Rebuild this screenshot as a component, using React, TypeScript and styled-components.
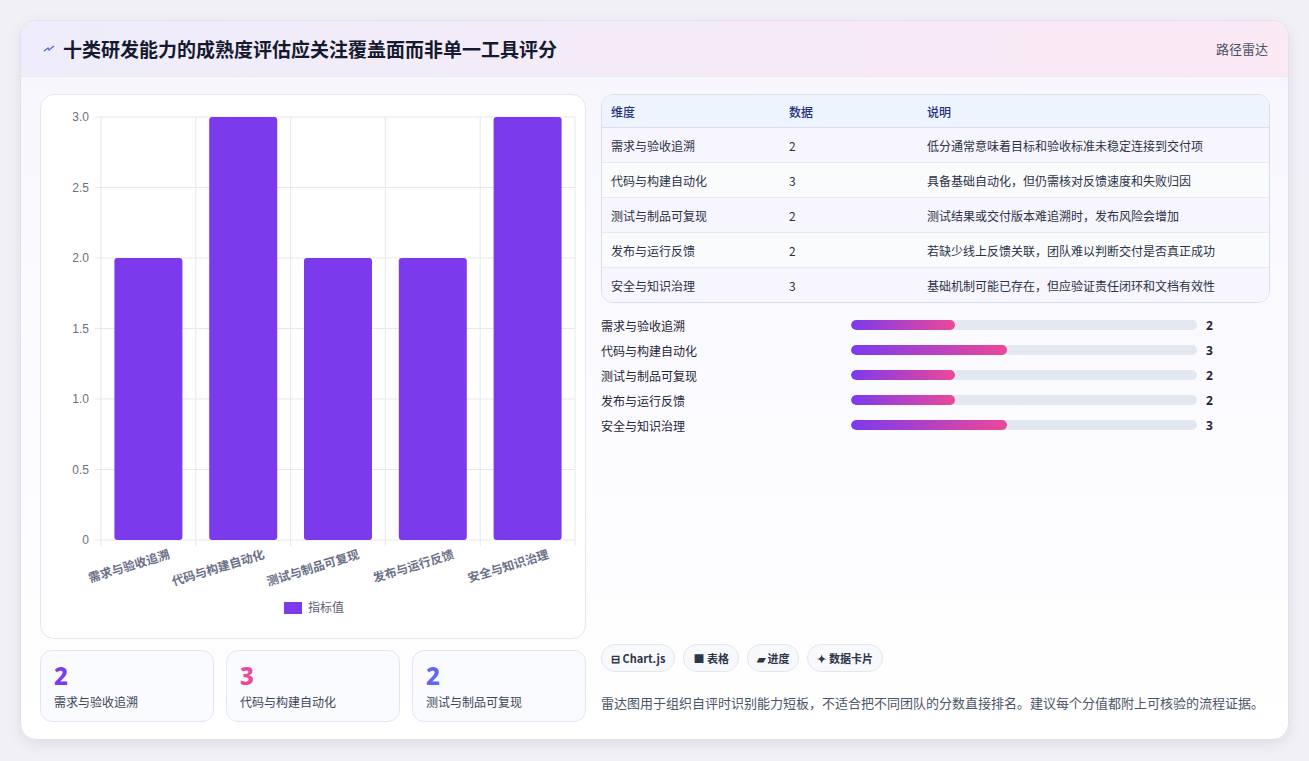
import React from 'react';
import styled, { createGlobalStyle } from 'styled-components';

const GlobalStyle = createGlobalStyle`
  body { margin: 0; background: #f1f1f5; font-family: "Noto Sans CJK SC", "Noto Sans", sans-serif; }
`;

const rows = [
  { name: '需求与验收追溯', value: 2, note: '低分通常意味着目标和验收标准未稳定连接到交付项' },
  { name: '代码与构建自动化', value: 3, note: '具备基础自动化，但仍需核对反馈速度和失败归因' },
  { name: '测试与制品可复现', value: 2, note: '测试结果或交付版本难追溯时，发布风险会增加' },
  { name: '发布与运行反馈', value: 2, note: '若缺少线上反馈关联，团队难以判断交付是否真正成功' },
  { name: '安全与知识治理', value: 3, note: '基础机制可能已存在，但应验证责任闭环和文档有效性' },
];

const Page = styled.div`
  padding: 20px 20px 21px 20px;
`;

const Card = styled.div`
  height: 718px;
  border: 1px solid #e2e0f0;
  border-radius: 16px;
  background: linear-gradient(180deg, #f7f6fe 0%, #ffffff 100%);
  box-shadow: 0 4px 14px rgba(60, 50, 120, 0.1);
  overflow: hidden;
  display: flex;
  flex-direction: column;
`;

const Header = styled.div`
  height: 55px;
  flex-shrink: 0;
  display: flex;
  align-items: center;
  justify-content: space-between;
  padding: 0 20px 0 22px;
  background: linear-gradient(90deg, #efedfb 0%, #fbe9f4 100%);
  border-bottom: 1px solid #ebe6f3;
`;

const Title = styled.h1`
  margin: 0;
  font-size: 19px;
  font-weight: 700;
  color: #161a2e;
  display: flex;
  align-items: center;
  gap: 8px;
`;

const Tag = styled.span`
  font-size: 13px;
  color: #4b5268;
`;

const Body = styled.div`
  flex: 1;
  display: grid;
  grid-template-columns: 546px 1fr;
  gap: 15px;
  padding: 17px 18px 18px 19px;
`;

const Col = styled.div`
  display: flex;
  flex-direction: column;
  gap: 11px;
`;

const ChartBox = styled.div`
  height: 543px;
  border: 1px solid #e6e6f0;
  border-radius: 14px;
  background: #fff;
`;

const Stats = styled.div`
  display: grid;
  grid-template-columns: repeat(3, 1fr);
  gap: 12px;
`;

const Stat = styled.div`
  height: 72px;
  border: 1px solid #e2e6f2;
  border-radius: 12px;
  background: #f9fbff;
  padding: 10px 13px;
  box-sizing: border-box;
`;

const StatNum = styled.div<{ $c: string }>`
  font-size: 24px;
  font-weight: 800;
  line-height: 30px;
  color: ${({ $c }) => $c};
  font-family: "Noto Sans", sans-serif;
`;

const StatLabel = styled.div`
  font-size: 12px;
  color: #3d4458;
  margin-top: 2px;
`;

const Table = styled.table`
  width: 100%;
  border-collapse: separate;
  border-spacing: 0;
  border: 1px solid #d8deec;
  border-radius: 12px;
  overflow: hidden;
  font-size: 12px;
  color: #2b3245;
  background: #fafbfd;
`;

const Th = styled.th<{ $w?: string }>`
  text-align: left;
  font-weight: 500;
  color: #23307a;
  background: #eef4fe;
  height: 32px;
  padding: 0 9px;
  width: ${({ $w }) => $w || 'auto'};
  border-bottom: 1px solid #d8deec;
`;

const Td = styled.td`
  height: 34px;
  padding: 0 9px;
  border-bottom: 1px solid #e6eaf2;
  tr:last-child & { border-bottom: none; }
`;

const Tr = styled.tr<{ $odd: boolean }>`
  background: ${({ $odd }) => ($odd ? '#f7f5fd' : '#fafbfd')};
`;

const Bars = styled.div`
  display: flex;
  flex-direction: column;
  gap: 7px;
  margin-top: 2px;
`;

const BarRow = styled.div`
  display: grid;
  grid-template-columns: 250px 346px 1fr;
  align-items: center;
  height: 18px;
  font-size: 12px;
  color: #1f2535;
`;

const Track = styled.div`
  height: 10px;
  border-radius: 5px;
  background: #e3e8f0;
  overflow: hidden;
`;

const Fill = styled.div`
  height: 100%;
  border-radius: 5px;
  background: linear-gradient(90deg, #7c3aed, #ec4899);
`;

const BarVal = styled.span`
  font-weight: 700;
  padding-left: 9px;
  font-family: "Noto Sans", sans-serif;
`;

const Spacer = styled.div`
  flex: 1;
`;

const Chips = styled.div`
  display: flex;
  gap: 8px;
`;

const Chip = styled.span`
  height: 26px;
  padding: 0 9px;
  border: 1px solid #e3e6ef;
  border-radius: 14px;
  background: #f8f9fc;
  font-size: 11px;
  font-weight: 700;
  color: #2e3548;
  display: flex;
  align-items: center;
  gap: 3px;
`;

const Note = styled.p`
  margin: 10px 0 10px 0;
  font-size: 13px;
  color: #4c5468;
`;

const Chart: React.FC = () => {
  const x0 = 60, x1 = 534, yTop = 22, yBot = 445;
  const step = (x1 - x0) / 5;
  const unit = (yBot - yTop) / 3;
  const ticks = [0, 0.5, 1, 1.5, 2, 2.5, 3];
  return (
    <svg width="546" height="543" style={{ display: 'block' }}>
      {ticks.map(t => {
        const y = yBot - t * unit;
        return (
          <g key={t}>
            <line x1={x0 - 6} x2={x1} y1={y} y2={y} stroke="#e5e7eb" />
            <text x={x0 - 12} y={y + 4} fontSize="12" fill="#6b6f7a" textAnchor="end" fontFamily="Liberation Sans, sans-serif">
              {t === 0 ? '0' : t.toFixed(1)}
            </text>
          </g>
        );
      })}
      {[0, 1, 2, 3, 4, 5].map(i => (
        <line key={i} x1={x0 + i * step} x2={x0 + i * step} y1={yTop} y2={yBot + 6} stroke="#e5e7eb" />
      ))}
      {rows.map((r, i) => {
        const cx = x0 + step * (i + 0.5);
        const h = r.value * unit;
        return (
          <g key={r.name}>
            <rect x={cx - 34} y={yBot - h} width={68} height={h} rx={3} fill="#7c3aed" />
            <text
              transform={`translate(${cx + 22}, ${yBot + 18}) rotate(-17)`}
              fontSize="12"
              fontWeight="700"
              fill="#6b7088"
              textAnchor="end"
            >
              {r.name}
            </text>
          </g>
        );
      })}
      <rect x={243} y={507} width={18} height={12} fill="#7c3aed" />
      <text x={267} y={517} fontSize="12" fill="#5b6070">指标值</text>
    </svg>
  );
};

const App: React.FC = () => (
  <>
    <GlobalStyle />
    <Page>
      <Card>
        <Header>
          <Title>
            <svg width="12" height="10" viewBox="0 0 12 10">
              <path d="M1 7 L5 4 L6 6 L11 2" stroke="#4f6ae0" strokeWidth="1.4" fill="none" />
            </svg>
            十类研发能力的成熟度评估应关注覆盖面而非单一工具评分
          </Title>
          <Tag>路径雷达</Tag>
        </Header>
        <Body>
          <Col>
            <ChartBox>
              <Chart />
            </ChartBox>
            <Stats>
              <Stat><StatNum $c="#7c3aed">2</StatNum><StatLabel>需求与验收追溯</StatLabel></Stat>
              <Stat><StatNum $c="#ec4899">3</StatNum><StatLabel>代码与构建自动化</StatLabel></Stat>
              <Stat><StatNum $c="#6366f1">2</StatNum><StatLabel>测试与制品可复现</StatLabel></Stat>
            </Stats>
          </Col>
          <Col>
            <Table>
              <thead>
                <tr>
                  <Th $w="160px">维度</Th>
                  <Th $w="120px">数据</Th>
                  <Th>说明</Th>
                </tr>
              </thead>
              <tbody>
                {rows.map((r, i) => (
                  <Tr key={r.name} $odd={i % 2 === 0}>
                    <Td>{r.name}</Td>
                    <Td>{r.value}</Td>
                    <Td>{r.note}</Td>
                  </Tr>
                ))}
              </tbody>
            </Table>
            <Bars>
              {rows.map(r => (
                <BarRow key={r.name}>
                  <span>{r.name}</span>
                  <Track><Fill style={{ width: `${r.value * 15}%` }} /></Track>
                  <BarVal>{r.value}</BarVal>
                </BarRow>
              ))}
            </Bars>
            <Spacer />
            <Chips>
              <Chip>⊟ Chart.js</Chip>
              <Chip>■ 表格</Chip>
              <Chip>▰ 进度</Chip>
              <Chip>✦ 数据卡片</Chip>
            </Chips>
            <Note>雷达图用于组织自评时识别能力短板，不适合把不同团队的分数直接排名。建议每个分值都附上可核验的流程证据。</Note>
          </Col>
        </Body>
      </Card>
    </Page>
  </>
);

export default App;
